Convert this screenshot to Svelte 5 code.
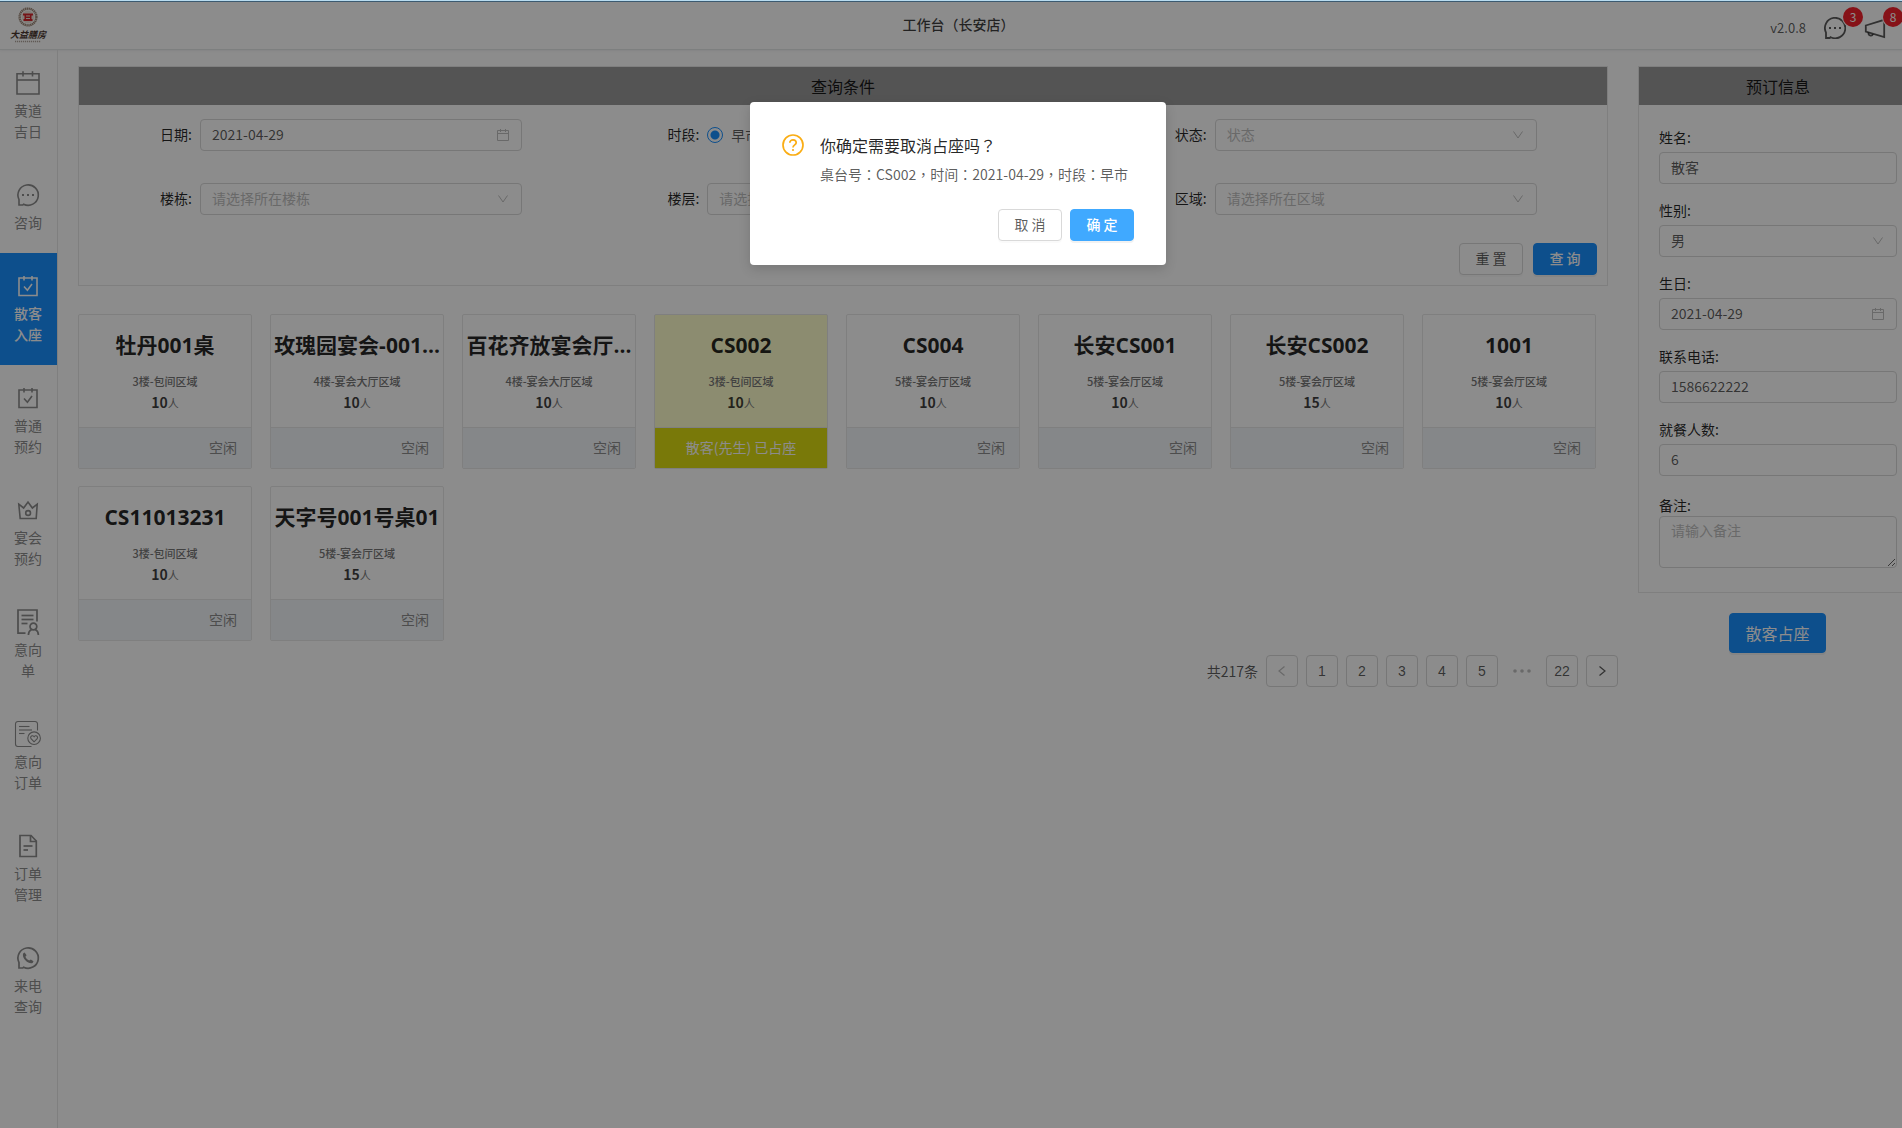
<script lang="ts">
	// ─── DATA ────────────────────────────────────────────────────────────────────────────────────

	const bubble = 'M5 24V18.6A10.2 10.2 0 1 1 9.6 23.2L8.8 24Z';
	const bookedCalendar = {
		width: 1.6,
		lines: ['M5 6H23V23.5H5Z', 'M10 4V8.5', 'M18 4V8.5', 'M10 14.5L13.4 18.2L18 12'],
		fills: []
	};

	const navItems = [
		{
			label: '黄道吉日',
			width: 1.6,
			lines: ['M3 4.8H25V25H3Z', 'M3 11H25', 'M9 2.2V7.5', 'M18.5 2.2V7.5'],
			fills: []
		},
		{ label: '咨询', width: 1.6, lines: [bubble], fills: ['M8 13h2v2H8Z', 'M13 13h2v2H13Z', 'M18 13h2v2H18Z'] },
		{ label: '散客入座', ...bookedCalendar },
		{ label: '普通预约', ...bookedCalendar },
		{
			label: '宴会预约',
			width: 1.6,
			lines: [
				'M4.8 8.2L9.6 12L14 6L18.4 12L23.2 8.2L22.2 22.5H6.2Z',
				'M11.7 17A2.4 2.4 0 1 0 16.5 17A2.4 2.4 0 1 0 11.7 17'
			],
			fills: []
		},
		{
			label: '意向单',
			width: 1.7,
			lines: [
				'M11.5 25.2H4V2H23V13.5',
				'M7.5 7.5H19.5',
				'M7.5 11.5H19.5',
				'M7.5 15.5H13.5',
				'M16 18.5A3.4 3.4 0 1 0 22.8 18.5A3.4 3.4 0 1 0 16 18.5',
				'M14.4 27C14.4 24.6 15.6 22.6 17.6 21.6M24.4 27C24.4 24.6 23.2 22.6 21.2 21.6'
			],
			fills: []
		},
		{
			label: '意向订单',
			width: 1.1,
			lines: [
				'M17.5 26.5H4A2.5 2.5 0 0 1 1.5 24V4A2.5 2.5 0 0 1 4 1.5H21A2.5 2.5 0 0 1 23.5 4V10.5',
				'M5 6.5H15.5',
				'M5 10H18',
				'M5 13.5H10.5',
				'M13.8 18.2A6.3 6.3 0 1 0 26.4 18.2A6.3 6.3 0 1 0 13.8 18.2',
				'M20.1 21.8L17 18.7C15.6 16.6 18.6 14.4 20.1 16.7C21.6 14.4 24.6 16.6 23.2 18.7Z'
			],
			fills: []
		},
		{
			label: '订单管理',
			width: 1.7,
			lines: ['M6 3.5H17L22.3 9V24.5H6Z', 'M16.5 3.5V9.5H22.3', 'M9.5 14H18.5', 'M9.5 18H14'],
			fills: []
		},
		{
			label: '来电查询',
			width: 1.7,
			lines: [bubble],
			fills: [
				'M9.3 9.2L10.6 8.4L12.6 11.2L11.4 12.8C12.2 14.6 13.3 15.7 15.2 16.6L16.8 15.4L19.5 17.3L18.6 18.9C16.8 20 13.8 18.7 11.6 16.5C9.3 14.2 8.2 11 9.3 9.2Z'
			]
		}
	];

	const tables = [
		{ name: '牡丹001桌', area: '3楼-包间区域', seats: 10 },
		{ name: '玫瑰园宴会-001...', area: '4楼-宴会大厅区域', seats: 10 },
		{ name: '百花齐放宴会厅...', area: '4楼-宴会大厅区域', seats: 10 },
		{ name: 'CS002', area: '3楼-包间区域', seats: 10, guest: '散客(先生) 已占座' },
		{ name: 'CS004', area: '5楼-宴会厅区域', seats: 10 },
		{ name: '长安CS001', area: '5楼-宴会厅区域', seats: 10 },
		{ name: '长安CS002', area: '5楼-宴会厅区域', seats: 15 },
		{ name: '1001', area: '5楼-宴会厅区域', seats: 10 },
		{ name: 'CS11013231', area: '3楼-包间区域', seats: 10 },
		{ name: '天字号001号桌01', area: '5楼-宴会厅区域', seats: 15 }
	];

	const pages = [1, 2, 3, 4, 5];

	// ─── STATE ───────────────────────────────────────────────────────────────────────────────────

	let activeNav = $state('散客入座');
	let confirmOpen = $state(true);

	function closeConfirm() {
		confirmOpen = false;
	}
</script>

{#snippet chevron()}
	<svg class="suffix" viewBox="0 0 14 14" aria-hidden="true"><path d="M2.5 3.5L7 10L11.5 3.5" /></svg>
{/snippet}

{#snippet calendar()}
	<svg class="suffix" viewBox="0 0 14 14" aria-hidden="true">
		<path d="M1.5 2.5H12.5V12.5H1.5ZM1.5 5.5H12.5M4.5 1V4M9.5 1V4" />
	</svg>
{/snippet}

{#snippet select(id: string, text: string, placeholder: boolean)}
	<div class="control">
		<select {id} class="field" class:placeholder>
			<option>{text}</option>
		</select>
		{@render chevron()}
	</div>
{/snippet}

<div class="app">
	<div class="window-edge"></div>

	<header class="topbar">
		<svg class="logo" viewBox="0 0 40 38" role="img" aria-label="大益膳房">
			<circle cx="20" cy="11" r="8.4" fill="none" stroke="#a08a7a" stroke-width="2.4" stroke-dasharray="1.4 0.5" />
			<circle cx="20" cy="11" r="6.4" fill="#ece4da" />
			<path d="M15 7.5H25V9.5H15ZM16.5 10.5H23.5V12H16.5ZM15.5 13H24.5V15H15.5ZM16.5 9H18V15H16.5ZM22 9H23.5V15H22Z" fill="#d8262c" />
			<text x="20" y="32" text-anchor="middle">大益膳房</text>
			<path d="M7 35.5H33" stroke="#b0a49c" stroke-width="1.4" stroke-dasharray="1.2 0.8" />
		</svg>
		<h1>工作台（长安店）</h1>
		<div class="topbar-actions">
			<span class="version">v2.0.8</span>
			<button class="icon-button" type="button" aria-label="消息">
				<svg viewBox="3 3 22 22"><path d={bubble} /><path class="dots" d="M8 13h2v2H8ZM13 13h2v2H13ZM18 13h2v2H18Z" /></svg>
				<span class="badge">3</span>
			</button>
			<button class="icon-button" type="button" aria-label="公告">
				<svg viewBox="0 0 22 22">
					<path d="M1.8 8.5L20.2 2.8V20L1.8 14.5Z" />
					<path d="M4.6 15.5A2.3 2.3 0 0 0 9 17" />
				</svg>
				<span class="badge">8</span>
			</button>
		</div>
	</header>

	<div class="layout">
		<nav class="sidebar">
			{#each navItems as item}
				<button
					class="nav-item"
					class:active={item.label === activeNav}
					type="button"
					onclick={() => (activeNav = item.label)}
				>
					<svg viewBox="0 0 28 28" aria-hidden="true" stroke-width={item.width}>
						{#each item.lines as d}
							<path {d} />
						{/each}
						{#each item.fills as d}
							<path class="solid" {d} />
						{/each}
					</svg>
					<span>{item.label}</span>
				</button>
			{/each}
		</nav>

		<main class="content">
			<div class="workspace">
				<section class="panel query">
					<h2>查询条件</h2>
					<form class="filters">
						<div class="filter">
							<label for="date">日期:</label>
							<div class="control">
								<input id="date" class="field" type="text" value="2021-04-29" />
								{@render calendar()}
							</div>
						</div>
						<div class="filter">
							<label for="morning">时段:</label>
							<div class="radios">
								<input id="morning" type="radio" name="period" checked />
								<span>早市</span>
							</div>
						</div>
						<div class="filter">
							<label for="status">状态:</label>
							{@render select('status', '状态', true)}
						</div>
						<div class="filter">
							<label for="building">楼栋:</label>
							{@render select('building', '请选择所在楼栋', true)}
						</div>
						<div class="filter">
							<label for="floor">楼层:</label>
							{@render select('floor', '请选择所在楼层', true)}
						</div>
						<div class="filter">
							<label for="area">区域:</label>
							{@render select('area', '请选择所在区域', true)}
						</div>
					</form>
					<div class="query-actions">
						<button class="btn" type="button">重 置</button>
						<button class="btn primary" type="button">查 询</button>
					</div>
				</section>

				<section class="tables">
					{#each tables as table}
						<article class="card" class:taken={table.guest}>
							<div class="card-body">
								<h3>{table.name}</h3>
								<p class="area">{table.area}</p>
								<p class="seats"><strong>{table.seats}</strong>人</p>
							</div>
							<footer>{table.guest ?? '空闲'}</footer>
						</article>
					{/each}
				</section>

				<nav class="pagination" aria-label="分页">
					<span class="total">共217条</span>
					<button class="page" type="button" disabled aria-label="上一页">
						<svg viewBox="0 0 12 12"><path d="M8.5 1.5L3 6L8.5 10.5" /></svg>
					</button>
					{#each pages as page}
						<button class="page" type="button">{page}</button>
					{/each}
					<svg class="more" viewBox="0 0 32 32" aria-hidden="true">
						<circle cx="9" cy="16" r="1.8" />
						<circle cx="16" cy="16" r="1.8" />
						<circle cx="23" cy="16" r="1.8" />
					</svg>
					<button class="page" type="button">22</button>
					<button class="page" type="button" aria-label="下一页">
						<svg viewBox="0 0 12 12"><path d="M3.5 1.5L9 6L3.5 10.5" /></svg>
					</button>
				</nav>
			</div>

			<aside class="booking">
				<section class="panel">
					<h2>预订信息</h2>
					<form class="booking-form">
						<div class="item">
							<label for="name">姓名:</label>
							<input id="name" class="field" type="text" value="散客" />
						</div>
						<div class="item">
							<label for="gender">性别:</label>
							{@render select('gender', '男', false)}
						</div>
						<div class="item">
							<label for="birthday">生日:</label>
							<div class="control">
								<input id="birthday" class="field" type="text" value="2021-04-29" />
								{@render calendar()}
							</div>
						</div>
						<div class="item">
							<label for="phone">联系电话:</label>
							<input id="phone" class="field" type="text" value="1586622222" />
						</div>
						<div class="item">
							<label for="people">就餐人数:</label>
							<input id="people" class="field" type="text" value="6" />
						</div>
						<div class="item note">
							<label for="note">备注:</label>
							<textarea id="note" class="field" placeholder="请输入备注"></textarea>
						</div>
					</form>
				</section>
				<button class="btn primary large" type="button">散客占座</button>
			</aside>
		</main>
	</div>

	{#if confirmOpen}
		<div class="mask">
			<div class="confirm" role="dialog" aria-modal="true" aria-labelledby="confirm-title">
				<div class="confirm-body">
					<svg viewBox="0 0 22 22" aria-hidden="true">
						<circle cx="11" cy="11" r="10" />
						<path d="M7.8 8.8C7.8 4.8 14.2 4.8 14.2 8.8C14.2 10.8 11 11 11 13.4" />
						<circle class="dot" cx="11" cy="16" r="1.1" />
					</svg>
					<div>
						<h2 id="confirm-title">你确定需要取消占座吗？</h2>
						<p>桌台号：CS002，时间：2021-04-29，时段：早市</p>
					</div>
				</div>
				<div class="confirm-actions">
					<button class="btn" type="button" onclick={closeConfirm}>取 消</button>
					<button class="btn primary hover" type="button" onclick={closeConfirm}>确 定</button>
				</div>
			</div>
		</div>
	{/if}
</div>

<style>
	:global(body) {
		margin: 0;
		overflow: hidden;
		background: #fff;
	}

	.app {
		position: relative;
		display: flex;
		flex-direction: column;
		width: calc(100% + 15px);
		min-height: 100vh;
		color: rgba(0, 0, 0, 0.65);
		font-family: 'Noto Sans CJK SC', 'Noto Sans', sans-serif;
		font-size: 14px;
		line-height: 21px;
	}

	.app *,
	.app *::before {
		box-sizing: border-box;
	}

	h1,
	h2,
	h3,
	p {
		margin: 0;
		font-weight: 400;
	}

	button,
	input,
	select,
	textarea {
		margin: 0;
		color: inherit;
		font: inherit;
	}

	svg {
		fill: none;
		stroke: currentColor;
	}

	.window-edge {
		position: absolute;
		top: 0;
		left: 0;
		right: 0;
		z-index: 20;
		height: 2px;
		background: linear-gradient(#b8dcf0 50%, #3c5a70 50%);
	}

	/* ─── Header ─── */
	.topbar {
		display: grid;
		grid-template-columns: 1fr auto 1fr;
		align-items: center;
		height: 50px;
		border-bottom: 1px solid #e4e8e8;
		box-shadow: 0 1px 2px rgba(0, 21, 41, 0.06);
	}

	.logo {
		width: 40px;
		height: 38px;
		margin-left: 8px;
		stroke: none;
	}

	.logo text {
		fill: #4c3830;
		font-size: 9px;
		font-weight: 700;
		font-style: italic;
	}

	.topbar h1 {
		color: rgba(0, 0, 0, 0.75);
		font-family: 'Noto Sans CJK TC', sans-serif;
		font-size: 14px;
		font-weight: 500;
	}

	.topbar-actions {
		display: flex;
		align-items: center;
		justify-content: flex-end;
		gap: 18px;
		padding: 6px 31px 0 0;
	}

	.version {
		font-size: 13px;
	}

	.icon-button {
		position: relative;
		width: 22px;
		height: 22px;
		padding: 0;
		border: 0;
		background: none;
		cursor: pointer;
	}

	.icon-button svg {
		display: block;
		stroke-width: 1.8;
	}

	.icon-button .dots {
		fill: currentColor;
		stroke: none;
	}

	.badge {
		position: absolute;
		top: -10px;
		left: 19px;
		width: 20px;
		height: 20px;
		border-radius: 10px;
		background: #f5222d;
		box-shadow: 0 0 0 1px #fff;
		color: #fff;
		font-size: 12px;
		line-height: 20px;
		text-align: center;
	}

	/* ─── Sidebar ─── */
	.layout {
		display: flex;
		flex: 1;
	}

	.sidebar {
		flex: 0 0 58px;
		border-right: 1px solid #e8e8e8;
	}

	.nav-item {
		display: flex;
		flex-direction: column;
		align-items: center;
		gap: 3px;
		width: 100%;
		padding: 19px 15px 20px 14px;
		border: 0;
		background: none;
		color: #8c8c8c;
		cursor: pointer;
	}

	.nav-item svg {
		width: 28px;
		height: 28px;
	}

	.nav-item .solid {
		fill: currentColor;
		stroke: none;
	}

	.nav-item.active {
		background: #1890ff;
		color: #fff;
	}

	.nav-item.active span {
		font-weight: 500;
	}

	/* ─── Page body ─── */
	.content {
		display: flex;
		flex: 1;
		align-items: flex-start;
		gap: 30px;
		padding: 16px 0 0 20px;
	}

	.workspace {
		flex: 1;
		min-width: 0;
	}

	.panel {
		border: 1px solid #e8e8e8;
	}

	.panel h2 {
		height: 38px;
		background: #999;
		color: rgba(0, 0, 0, 0.85);
		font-size: 16px;
		line-height: 38px;
		text-align: center;
	}

	.filters {
		display: grid;
		grid-template-columns: repeat(3, 1fr);
		row-gap: 32px;
		padding: 14px 6px 28px 0;
	}

	.filter {
		display: flex;
		align-items: center;
		height: 32px;
		padding-right: 64px;
	}

	.filter label {
		flex: 0 0 121px;
		padding: 0 8px 2px 0;
		text-align: right;
	}

	label {
		color: rgba(0, 0, 0, 0.85);
	}

	.control {
		position: relative;
		flex: 1;
	}

	.field {
		display: block;
		width: 100%;
		height: 32px;
		padding: 3px 11px 5px;
		border: 1px solid #d9d9d9;
		border-radius: 4px;
		outline: none;
		background: #fff;
		appearance: none;
	}

	.field.placeholder,
	.field::placeholder {
		color: #bfbfbf;
	}

	.suffix {
		position: absolute;
		top: 9px;
		right: 12px;
		width: 14px;
		height: 14px;
		color: #bfbfbf;
		pointer-events: none;
	}

	.radios {
		display: flex;
		align-items: center;
		gap: 8px;
	}

	.radios input {
		width: 16px;
		height: 16px;
		border: 1px solid #1890ff;
		border-radius: 50%;
		background: radial-gradient(#1890ff 4px, #fff 5px);
		appearance: none;
	}

	.query-actions {
		display: flex;
		justify-content: flex-end;
		gap: 10px;
		padding: 0 10px 10px;
	}

	.btn {
		min-width: 64px;
		height: 32px;
		padding: 0 15px 2px;
		border: 1px solid #d9d9d9;
		border-radius: 4px;
		background: #fff;
		box-shadow: 0 2px 0 rgba(0, 0, 0, 0.02);
		cursor: pointer;
	}

	.btn.primary {
		border-color: #1890ff;
		background: #1890ff;
		box-shadow: 0 2px 0 rgba(0, 0, 0, 0.05);
		color: #fff;
		font-weight: 500;
	}

	.btn.primary.hover {
		border-color: #40a9ff;
		background: #40a9ff;
	}

	.btn.large {
		height: 40px;
		padding-bottom: 0;
		font-size: 16px;
		font-weight: 400;
	}

	/* ─── Table cards ─── */
	.tables {
		display: grid;
		grid-template-columns: repeat(auto-fill, 174px);
		gap: 17px 18px;
		padding-top: 28px;
	}

	.card {
		border: 1px solid #e8e8e8;
		border-radius: 2px;
		text-align: center;
	}

	.card-body {
		padding: 14px 0 13px;
		border-bottom: 1px solid #e8e8e8;
	}

	.card h3 {
		margin-bottom: 10px;
		overflow: hidden;
		color: rgba(0, 0, 0, 0.85);
		font-family: 'Open Sans', 'Noto Sans CJK SC', sans-serif;
		font-size: 21px;
		font-weight: 700;
		line-height: 32px;
		white-space: nowrap;
	}

	.area {
		color: #777;
		font-size: 11px;
		font-weight: 500;
	}

	.seats {
		color: #777;
		font-size: 11px;
	}

	.seats strong {
		color: rgba(0, 0, 0, 0.75);
		font-size: 14px;
		font-weight: 600;
	}

	.card footer {
		height: 40px;
		padding: 0 14px;
		background: #f2f6fa;
		color: #8c8c8c;
		line-height: 38px;
		text-align: right;
	}

	.card.taken {
		background: #ffffcc;
	}

	.card.taken footer {
		background: #dcdc12;
		color: #fff;
		text-align: center;
	}

	/* ─── Pagination ─── */
	.pagination {
		display: flex;
		align-items: center;
		justify-content: flex-end;
		gap: 8px;
		margin: 14px -10px 0 0;
	}

	.page {
		width: 32px;
		height: 32px;
		padding: 0;
		border: 1px solid #d9d9d9;
		border-radius: 4px;
		background: #fff;
		font-family: 'Liberation Sans', Arial, sans-serif;
		cursor: pointer;
	}

	.page svg {
		display: block;
		width: 12px;
		height: 12px;
		margin: 0 auto;
		stroke-width: 1.2;
	}

	.page:disabled {
		color: #bfbfbf;
	}

	.more {
		width: 32px;
		height: 32px;
		fill: #bfbfbf;
		stroke: none;
	}

	/* ─── Booking form ─── */
	.booking {
		display: flex;
		flex: 0 0 279px;
		flex-direction: column;
		align-items: center;
		gap: 20px;
	}

	.booking .panel {
		width: 100%;
		border-right: 0;
	}

	.booking-form {
		display: flex;
		flex-direction: column;
		gap: 16px;
		padding: 22px 20px 24px;
	}

	.item {
		display: flex;
		flex-direction: column;
		gap: 4px;
	}

	.item .control,
	.item .field {
		flex: none;
	}

	.item.note {
		gap: 0;
		padding-top: 3px;
	}

	textarea.field {
		height: 52px;
		resize: vertical;
	}

	/* ─── Confirm dialog ─── */
	.mask {
		position: absolute;
		inset: 0;
		z-index: 10;
		display: flex;
		align-items: flex-start;
		justify-content: center;
		padding: 102px 1px 0 0;
		background: rgba(0, 0, 0, 0.45);
	}

	.confirm {
		width: 416px;
		padding: 32px 32px 24px;
		border-radius: 4px;
		background: #fff;
		box-shadow: 0 4px 12px rgba(0, 0, 0, 0.15);
	}

	.confirm-body {
		display: flex;
		gap: 16px;
		font-family: 'Noto Sans CJK TC', sans-serif;
	}

	.confirm-body svg {
		flex: none;
		width: 22px;
		height: 22px;
		color: #faad14;
		stroke-width: 1.7;
	}

	.confirm-body .dot {
		fill: currentColor;
		stroke: none;
	}

	.confirm h2 {
		margin-bottom: 8px;
		color: rgba(0, 0, 0, 0.85);
		font-size: 16px;
		line-height: 22px;
	}

	.confirm p {
		white-space: nowrap;
	}

	.confirm-actions {
		display: flex;
		justify-content: flex-end;
		gap: 8px;
		margin-top: 24px;
	}
</style>
